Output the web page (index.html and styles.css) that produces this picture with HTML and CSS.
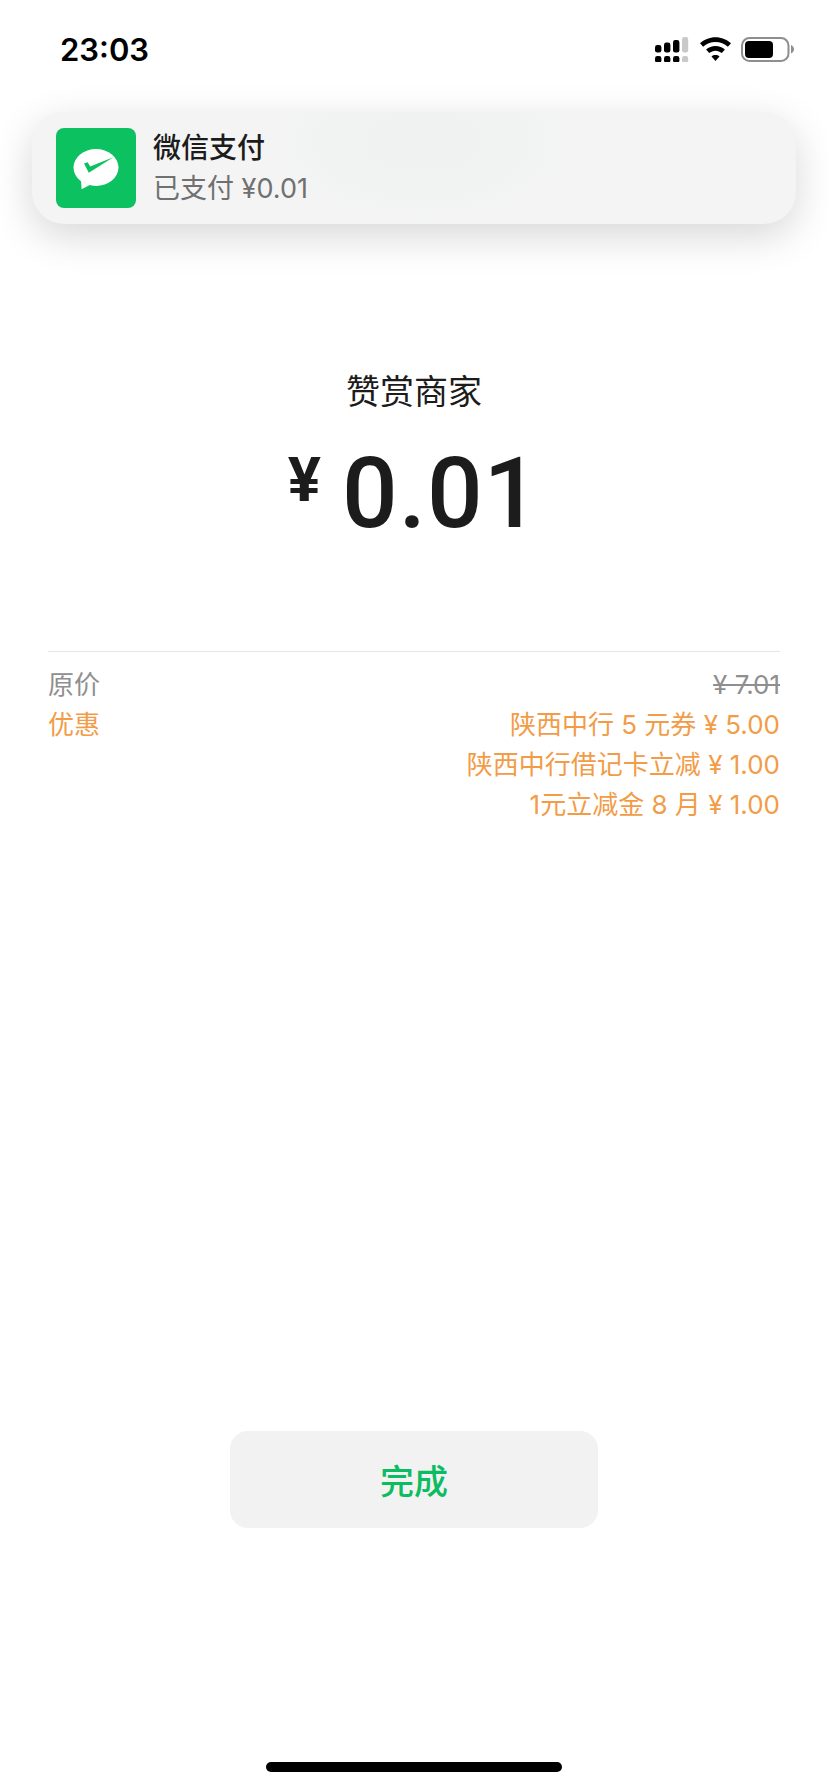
FILE: index.html
```html
<!DOCTYPE html>
<html lang="zh-CN">
<head>
<meta charset="utf-8">
<title>微信支付</title>
<link rel="stylesheet" href="styles.css">
</head>
<body>
<div class="page">
  <header class="status">
    <span class="time">23:03</span>
    <svg class="status-icons" width="140" height="26" viewBox="654 36 140 26" aria-hidden="true">
      <g fill="#000">
        <rect x="655" y="56" width="6.4" height="6.6" rx="2.4"/>
        <rect x="664" y="56" width="6.4" height="6.6" rx="2.4"/>
        <rect x="673" y="56" width="6.4" height="6.6" rx="2.4"/>
        <rect x="655" y="45" width="6.4" height="7.6" rx="2.4"/>
        <rect x="664" y="42.6" width="6.4" height="10" rx="2.4"/>
        <rect x="673" y="40" width="6.4" height="12.6" rx="2.4"/>
      </g>
      <g fill="#c9c9c9">
        <rect x="682" y="56" width="6.2" height="6.6" rx="2.4"/>
        <rect x="682" y="37" width="6.2" height="15.6" rx="2.4"/>
      </g>
      <path d="M715.5 37.2c6 0 11.400 2.300 15.500 6.100l-3.100 3.500c-3.300-3-7.600-4.800-12.400-4.800s-9.100 1.800-12.400 4.800l-3.100-3.500c4.100-3.800 9.500-6.100 15.500-6.100z" fill="#000"/>
      <path d="M715.500 46c3.600 0 6.900 1.400 9.400 3.600l-3.100 3.500c-1.700-1.500-3.900-2.400-6.300-2.400s-4.600.9-6.300 2.400l-3.100-3.500c2.500-2.200 5.800-3.600 9.400-3.600z" fill="#000"/>
      <path d="M715.500 55c1.500 0 2.900.5 4 1.400l-4 4.700-4-4.700c1.100-.9 2.500-1.400 4-1.400z" fill="#000"/>
      <rect x="742" y="38" width="46.500" height="23" rx="7.500" fill="none" stroke="#8e8e8e" stroke-width="2"/>
      <rect x="745" y="41" width="28" height="17" rx="4" fill="#000"/>
      <path d="M791 45v8.500c1.800-.7 3-2.300 3-4.200s-1.200-3.600-3-4.300z" fill="#8e8e8e"/>
    </svg>
  </header>

  <section class="banner">
    <svg class="app-icon" width="80" height="80" viewBox="0 0 80 80" aria-hidden="true">
      <rect width="80" height="80" rx="8" fill="#0cc160"/>
      <ellipse cx="40" cy="39.500" rx="22.500" ry="18.500" fill="#fff"/>
      <path d="M25 52l.6 9.300 10-5.300z" fill="#fff"/>
      <path d="M28 35.500l3.600-1.300 2.600 4.300 23.100-9.200-24.500 15.500z" fill="#0cc160"/>
    </svg>
    <div class="banner-text">
      <div class="banner-title">微信支付</div>
      <div class="banner-sub">已支付 ¥0.01</div>
    </div>
  </section>

  <main class="summary">
    <div class="merchant">赞赏商家</div>
    <div class="amount"><span class="currency">¥</span><span class="value">0.01</span></div>
  </main>

  <section class="details">
    <div class="row row-muted">
      <span>原价</span>
      <span class="struck">¥ 7.01</span>
    </div>
    <div class="row row-accent">
      <span>优惠</span>
      <div class="discounts">
        <span>陕西中行 5 元券 ¥ 5.00</span>
        <span>陕西中行借记卡立减 ¥ 1.00</span>
        <span>1元立减金 8 月 ¥ 1.00</span>
      </div>
    </div>
  </section>

  <div class="actions">
    <button class="done" type="button">完成</button>
  </div>

  <div class="home-bar"></div>
</div>
</body>
</html>
```

FILE: styles.css
```css
* { box-sizing: border-box; }
html, body { margin: 0; padding: 0; background: #fff; }
body { font-family: Inter, "Noto Sans CJK SC", sans-serif; }

.page {
  width: 828px;
  height: 1792px;
  display: flex;
  flex-direction: column;
  overflow: hidden;
}

.status {
  height: 112px;
  flex: none;
  padding: 30px 34px 0 60px;
  display: flex;
  justify-content: space-between;
  align-items: flex-start;
}
.time {
  font-size: 31px;
  line-height: 40px;
  font-weight: 600;
  color: #000;
}
.status-icons { margin-top: 6px; }

.banner {
  flex: none;
  height: 112px;
  margin: 0 32px;
  padding: 16px 24px;
  display: flex;
  gap: 17px;
  border-radius: 32px;
  background:
    radial-gradient(ellipse 170px 90px at 390px 30px, #eff2f0 0%, #f1f3f2 60%, rgba(244,244,244,0) 100%),
    #f4f4f4;
  box-shadow: 0 12px 40px rgba(0, 0, 0, .16);
}
.app-icon { flex: none; }
.banner-text { display: flex; flex-direction: column; gap: 2px; padding-top: 1px; }
.banner-title {
  font-size: 28px;
  line-height: 38px;
  font-weight: 500;
  color: #1c1c1c;
}
.banner-sub {
  font-size: 27px;
  line-height: 40px;
  color: #707070;
}

.summary {
  flex: none;
  margin-top: 143px;
  display: flex;
  flex-direction: column;
  align-items: center;
}
.merchant {
  font-size: 34px;
  line-height: 50px;
  color: #1c1c1c;
}
.amount {
  margin-top: 19px;
  display: flex;
  align-items: flex-start;
  gap: 21px;
  color: #1c1c1c;
  font-family: Roboto, sans-serif;
  font-weight: 500;
  height: 116px;
}
.currency { font-size: 62px; line-height: 88px; font-weight: 700; }
.value { font-size: 98px; line-height: 116px; letter-spacing: 1px; }

.details {
  flex: none;
  margin: 99px 48px 0;
  padding-top: 13px;
  border-top: 1px solid #e5e5e5;
  font-size: 26px;
  line-height: 40px;
}
.row { display: flex; justify-content: space-between; }
.row-muted { color: #8f8f8f; }
.row-accent { color: #f29c47; }
.struck { text-decoration: line-through; color: #8f8f8f; }
.discounts { display: flex; flex-direction: column; align-items: flex-end; }

.actions {
  flex: none;
  margin-top: 606px;
  display: flex;
  justify-content: center;
}
.done {
  width: 368px;
  height: 97px;
  border: 0;
  padding: 0;
  border-radius: 18px;
  background: #f2f2f2;
  color: #0cbc62;
  font-family: inherit;
  font-size: 34px;
  font-weight: 500;
}

.home-bar {
  flex: none;
  width: 296px;
  height: 10px;
  margin: 234px auto 0;
  border-radius: 5px;
  background: #000;
}
```
